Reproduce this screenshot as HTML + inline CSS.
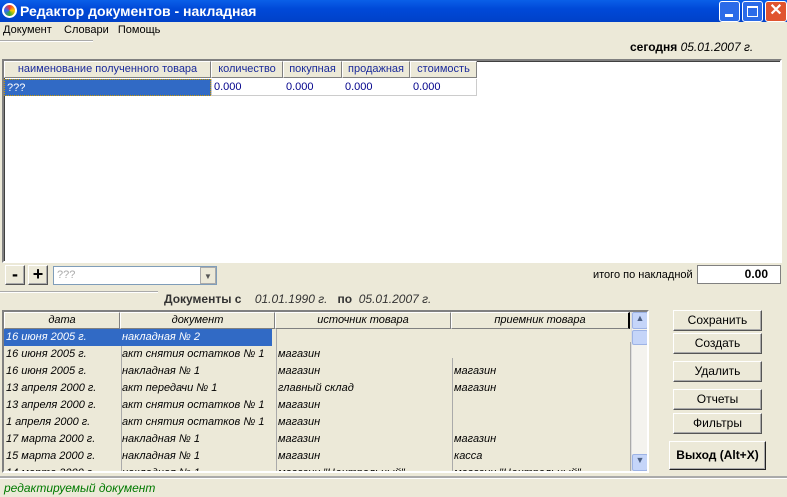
<!DOCTYPE html><html><head><meta charset="utf-8"><style>
*{box-sizing:border-box}body{margin:0;width:787px;height:497px;overflow:hidden;background:#ECE9D8;font-family:"Liberation Sans",sans-serif;font-size:11px;position:relative}
.a{position:absolute}
.title{left:0;top:0;width:787px;height:22px;background:linear-gradient(#0A5FE8,#0049D8 40%,#0041C8);color:#fff;font-weight:bold;font-size:14px;line-height:22px;padding-left:20px}
.wb{top:1px;width:21px;height:21px;border:1px solid #fff;border-radius:3px;background:#2B6BE8}
.hd{background:#ECE9D8;border:1px solid;border-color:#fff #808080 #808080 #fff;text-align:center;line-height:15px;height:17px}
.cell{height:17px;line-height:17px;padding-left:2px;white-space:nowrap;overflow:hidden}
.btn{border:1px solid;border-color:#fff #555 #555 #fff;background:#ECE9D8;text-align:center;font-size:12px;line-height:18px;box-shadow:inset -1px -1px #aaa}
.it{font-style:italic}
</style></head><body>
<div class="a title">Редактор документов - накладная</div>
<div class="a" style="left:2px;top:3px;width:15px;height:15px;border-radius:50%;background:conic-gradient(#e33,#fc0,#3a3,#36f,#e33);border:2px solid #fff"></div>
<div class="a wb" style="left:719px"><div style="margin:12px 0 0 5px;width:8px;height:3px;background:#fff"></div></div>
<div class="a wb" style="left:742px"><div style="margin:4px;width:11px;height:11px;border:1px solid #fff;border-top-width:2px"></div></div>
<div class="a wb" style="left:765px;width:22px;background:#E0542F;color:#fff;font-weight:bold;font-size:16px;text-align:center;line-height:18px">✕</div>
<div class="a" style="left:3px;top:24px;font-size:11px">Документ&nbsp;&nbsp;&nbsp; Словари &nbsp;&nbsp;Помощь</div>
<div class="a" style="left:0;top:40px;width:93px;border-top:1px solid #aaa;border-bottom:1px solid #fff"></div>
<div class="a" style="left:630px;top:40px;font-size:12px"><b>сегодня</b> <i style="font-size:12px">05.01.2007 г.</i></div>
<div class="a" style="left:2px;top:59px;width:780px;height:204px;background:#fff;border:2px solid;border-color:#808080 #fff #fff #808080;box-shadow:inset 1px 1px #404040"></div>
<div class="a hd" style="left:4px;top:61px;width:207px;color:#1a2a9a">наименование полученного товара</div>
<div class="a hd" style="left:211px;top:61px;width:72px;color:#1a2a9a">количество</div>
<div class="a hd" style="left:283px;top:61px;width:59px;color:#1a2a9a">покупная</div>
<div class="a hd" style="left:342px;top:61px;width:68px;color:#1a2a9a">продажная</div>
<div class="a hd" style="left:410px;top:61px;width:67px;color:#1a2a9a">стоимость</div>
<div class="a cell" style="left:4px;top:79px;width:207px;background:#316AC5;color:#fff;border:1px dotted #c90">???</div>
<div class="a cell" style="left:211px;top:79px;width:266px;color:#00008B;border:1px solid #ccc;border-top:0">0.000<span style="position:absolute;left:74px">0.000</span><span style="position:absolute;left:133px">0.000</span><span style="position:absolute;left:201px">0.000</span></div>
<div class="a btn" style="left:5px;top:265px;width:20px;height:20px;font-size:18px;font-weight:bold;line-height:16px">-</div>
<div class="a btn" style="left:28px;top:265px;width:20px;height:20px;font-size:18px;font-weight:bold;line-height:17px">+</div>
<div class="a" style="left:53px;top:266px;width:164px;height:19px;background:#fff;border:1px solid #7F9DB9;color:#aaa;padding-left:3px;line-height:17px">???<div style="position:absolute;right:0;top:0;width:16px;height:17px;background:#ECE9D8;border:1px solid #aaa;text-align:center;font-size:8px;color:#555">▼</div></div>
<div class="a" style="left:593px;top:269px">итого по накладной</div>
<div class="a" style="left:697px;top:265px;width:84px;height:19px;background:#fff;border:1px solid #808080;text-align:right;padding-right:12px;font-weight:bold;font-size:12px;line-height:17px">0.00</div>
<div class="a" style="left:0;top:291px;width:158px;border-top:1px solid #aaa;border-bottom:1px solid #fff"></div>
<div class="a" style="left:164px;top:292px;font-size:12px;color:#333"><b>Документы с</b> &nbsp;&nbsp;&nbsp;<i>01.01.1990 г.</i> &nbsp;&nbsp;<b>по</b>&nbsp; <i>05.01.2007 г.</i></div>
<div class="a" style="left:2px;top:310px;width:647px;height:163px;border:2px solid;border-color:#808080 #fff #fff #808080;overflow:hidden">
<div style="position:relative;width:643px;height:159px">
<div class="a hd it" style="left:0;top:0;width:116px">дата</div>
<div class="a hd it" style="left:116px;top:0;width:155px">документ</div>
<div class="a hd it" style="left:271px;top:0;width:176px">источник товара</div>
<div class="a hd it" style="left:447px;top:0;width:179px;border-right:2px solid #000">приемник товара</div>
<div class="a" style="left:117px;top:17px;height:150px;border-left:1px solid #aaa"></div>
<div class="a" style="left:272px;top:17px;height:150px;border-left:1px solid #aaa"></div>
<div class="a" style="left:448px;top:46px;height:120px;border-left:1px solid #aaa"></div>
<div class="a" style="left:626px;top:30px;height:130px;border-left:1px solid #aaa"></div>
<div class="a cell it" style="left:0;top:17px;width:268px;background:#316AC5;color:#fff">16 июня 2005 г.<span style="position:absolute;left:118px">накладная № 2</span></div>
<div class="a it" style="left:2px;top:34px;line-height:17px;width:620px">
<div style="position:relative;height:17px">16 июня 2005 г.<span class="a" style="left:116px">акт снятия остатков № 1</span><span class="a" style="left:272px">магазин</span></div>
<div style="position:relative;height:17px">16 июня 2005 г.<span class="a" style="left:116px">накладная № 1</span><span class="a" style="left:272px">магазин</span><span class="a" style="left:448px">магазин</span></div>
<div style="position:relative;height:17px">13 апреля 2000 г.<span class="a" style="left:116px">акт передачи № 1</span><span class="a" style="left:272px">главный склад</span><span class="a" style="left:448px">магазин</span></div>
<div style="position:relative;height:17px">13 апреля 2000 г.<span class="a" style="left:116px">акт снятия остатков № 1</span><span class="a" style="left:272px">магазин</span></div>
<div style="position:relative;height:17px">1 апреля 2000 г.<span class="a" style="left:116px">акт снятия остатков № 1</span><span class="a" style="left:272px">магазин</span></div>
<div style="position:relative;height:17px">17 марта 2000 г.<span class="a" style="left:116px">накладная № 1</span><span class="a" style="left:272px">магазин</span><span class="a" style="left:448px">магазин</span></div>
<div style="position:relative;height:17px">15 марта 2000 г.<span class="a" style="left:116px">накладная № 1</span><span class="a" style="left:272px">магазин</span><span class="a" style="left:448px">касса</span></div>
<div style="position:relative;height:17px">14 марта 2000 г.<span class="a" style="left:116px">накладная № 1</span><span class="a" style="left:272px">магазин "Центральный"</span><span class="a" style="left:448px">магазин "Центральный"</span></div>
</div>
<div class="a" style="left:627px;top:0;width:17px;height:159px;background:#F4F3EE;border-left:1px solid #ddd">
<div style="height:17px;background:#C5D5F9;border:1px solid #9db3e5;border-radius:2px;font-size:9px;text-align:center;color:#4d6185">▲</div>
<div style="height:15px;background:#C5D5F9;border:1px solid #9db3e5;border-radius:2px;margin-top:1px"></div>
<div style="position:absolute;bottom:0;width:16px;height:17px;background:#C5D5F9;border:1px solid #9db3e5;border-radius:2px;font-size:9px;text-align:center;color:#4d6185">▼</div></div>
</div></div>
<div class="a btn" style="left:673px;top:310px;width:89px;height:21px">Сохранить</div>
<div class="a btn" style="left:673px;top:333px;width:89px;height:21px">Создать</div>
<div class="a btn" style="left:673px;top:361px;width:89px;height:21px">Удалить</div>
<div class="a btn" style="left:673px;top:389px;width:89px;height:21px">Отчеты</div>
<div class="a btn" style="left:673px;top:413px;width:89px;height:21px">Фильтры</div>
<div class="a btn" style="left:669px;top:441px;width:97px;height:29px;font-weight:bold;line-height:26px;border-color:#fff #222 #222 #fff">Выход (Alt+X)</div>
<div class="a" style="left:0;top:476px;width:787px;border-top:2px solid #aaa;border-bottom:1px solid #fff"></div>
<div class="a it" style="left:4px;top:481px;color:#007a00;font-size:12px">редактируемый документ</div>
</body></html>
